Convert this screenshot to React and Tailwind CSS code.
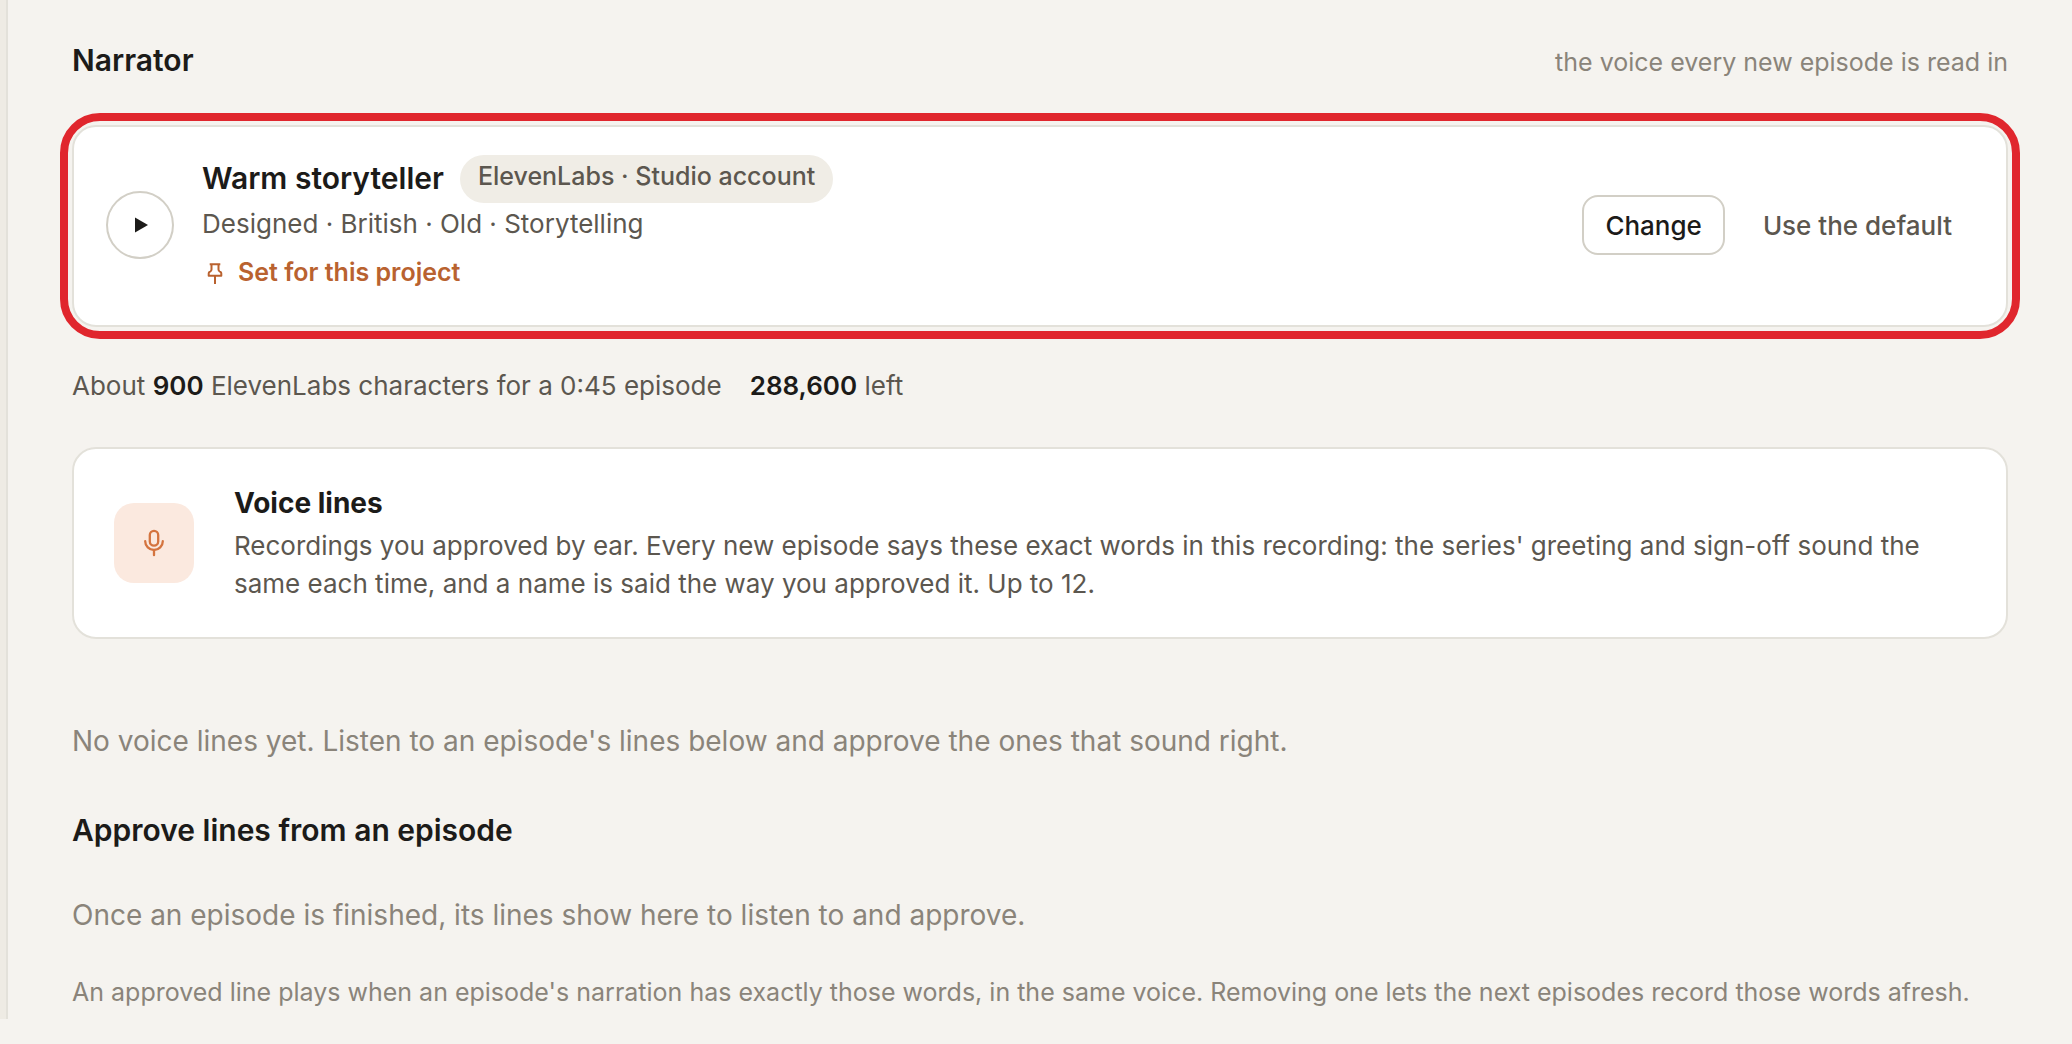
const PinIcon = () => (
  <svg className="h-7 w-7" viewBox="0 0 28 28" fill="none" stroke="currentColor" strokeWidth="2" strokeLinejoin="round" aria-hidden="true">
    <path d="M7.700 6.300h10.600M9.500 6.300v5.200c0 1-.4 1.500-1.200 2l-.7.400c-.6.400-.9.900-.9 1.600v2.300h12.600v-2.300c0-.7-.3-1.200-.9-1.600l-.7-.4c-.8-.5-1.200-1-1.200-2V6.300M13 17.800v8.200" />
  </svg>
);

const MicIcon = () => (
  <svg className="h-7 w-7" viewBox="0 0 28 28" fill="none" stroke="currentColor" strokeWidth="2.3" strokeLinecap="round" aria-hidden="true">
    <rect x="9.800" y="1.900" width="8.400" height="14.800" rx="4.200" />
    <path d="M5.200 12.200a8.800 8.800 0 0 0 17.600 0M14 21v5.200" />
  </svg>
);

const VoiceTag = ({ children }) => (
  <span className="rounded-full bg-[#f0ede6] px-[18px] pb-1.5 text-[25px] leading-[42px] font-medium text-[#5c574f]">
    {children}
  </span>
);

const NarratorCard = () => (
  <div className="relative mt-[45px] flex items-center gap-7 rounded-3xl border-2 border-[#e3e1da] bg-white px-8 pt-7 pb-[30px]">
    {/* highlight ring */}
    <div className="pointer-events-none absolute -inset-3.5 rounded-[40px] border-8 border-[#e0262d]" />

    <button
      type="button"
      aria-label="Play voice sample"
      className="flex h-[68px] w-[68px] shrink-0 items-center justify-center rounded-full border-2 border-[#d2cfc6] text-[#1c1b19]"
    >
      <svg className="h-4 w-4" viewBox="0 0 16 16" fill="currentColor" aria-hidden="true">
        <path d="M3 0.500L16 8L3 15.500z" />
      </svg>
    </button>

    <div className="min-w-0 flex-1 pb-1.5">
      <div className="flex items-start gap-4">
        <h3 className="text-[30px] leading-[46px] font-[620] text-[#1c1b19]">Warm storyteller</h3>
        <VoiceTag>ElevenLabs · Studio account</VoiceTag>
      </div>
      <p className="mt-0.5 text-[26px] leading-[38px]">Designed · British · Old · Storytelling</p>
      <p className="mt-3 flex items-center gap-2 text-[25px] leading-[34px] font-semibold text-[#b9622f]">
        <PinIcon />
        Set for this project
      </p>
    </div>

    <div className="flex shrink-0 items-center gap-4">
      <button
        type="button"
        className="h-[60px] rounded-2xl border-2 border-[#d2cfc6] px-[21px] text-[26px] font-[550] text-[#1c1b19]"
      >
        Change
      </button>
      <button type="button" className="h-[60px] px-[22px] text-[26px] font-[550]">
        Use the default
      </button>
    </div>
  </div>
);

const VoiceLinesCard = () => (
  <div className="mt-[42px] flex items-center gap-10 rounded-3xl border-2 border-[#e3e1da] bg-white px-10 pt-[33px] pb-[34px]">
    <div className="flex h-20 w-20 shrink-0 items-center justify-center rounded-[20px] bg-[#fbe9df] text-[#d4743f]">
      <MicIcon />
    </div>
    <div>
      <h3 className="text-[28px] leading-[42px] font-[650] text-[#1c1b19]">Voice lines</h3>
      <p className="mt-[3px] text-[26px] leading-[38px]">
        Recordings you approved by ear. Every new episode says these exact words in this recording: the series'
        greeting and sign-off sound the same each time, and a name is said the way you approved it. Up to 12.
      </p>
    </div>
  </div>
);

const App = () => {
  return (
    <div className="min-h-screen bg-[#f5f3ef] font-['Inter',sans-serif] text-[#5c574f]">
      <div className="flex">
        <div className="w-2 shrink-0 border-r-2 border-[#e3e1da] bg-[#eeebe4]" />

        <main className="flex-1 px-16 pt-[42px] pb-2">
          <div className="flex items-baseline justify-between">
            <h2 className="text-[30px] leading-9 font-[620] text-[#1c1b19]">Narrator</h2>
            <p className="text-[25px] leading-9 text-[#8a847a]">the voice every new episode is read in</p>
          </div>

          <NarratorCard />

          <p className="mt-10 flex gap-7 text-[26px] leading-[38px]">
            <span>
              About <b className="font-semibold text-[#1c1b19]">900</b> ElevenLabs characters for a 0:45 episode
            </span>
            <span>
              <b className="font-semibold text-[#1c1b19]">288,600</b> left
            </span>
          </p>

          <VoiceLinesCard />

          <p className="mt-[81px] text-[28px] leading-[42px] text-[#8a847a]">
            No voice lines yet. Listen to an episode's lines below and approve the ones that sound right.
          </p>

          <h2 className="mt-[50px] text-[30px] leading-9 font-[620] text-[#1c1b19]">
            Approve lines from an episode
          </h2>
          <p className="mt-[46px] text-[28px] leading-[42px] text-[#8a847a]">
            Once an episode is finished, its lines show here to listen to and approve.
          </p>
          <p className="mt-[37px] text-[25px] leading-[38px] text-[#8a847a]">
            An approved line plays when an episode's narration has exactly those words, in the same voice. Removing one
            lets the next episodes record those words afresh.
          </p>
        </main>
      </div>
    </div>
  );
};

export default App;
